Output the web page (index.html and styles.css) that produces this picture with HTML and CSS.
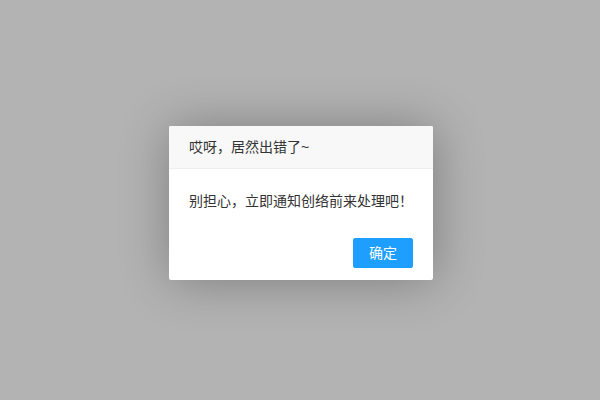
FILE: index.html
```html
<!DOCTYPE html>
<html lang="zh">
<head>
<meta charset="utf-8">
<link rel="stylesheet" href="styles.css">
</head>
<body>
<div class="stage">
  <div class="layer">
    <div class="layer-title">哎呀，居然出错了~</div>
    <div class="layer-content">别担心，立即通知创络前来处理吧！</div>
    <div class="layer-btns"><a class="btn">确定</a></div>
  </div>
</div>
</body>
</html>
```
FILE: styles.css
```css
html, body {
  margin: 0;
  padding: 0;
  height: 100%;
  background: #b3b3b3;
  font-family: "Liberation Sans", "Noto Sans CJK SC", sans-serif;
  font-size: 14px;
  color: #333;
}
.stage {
  height: 100%;
  box-sizing: border-box;
  display: flex;
  align-items: center;
  justify-content: center;
  padding: 6px 0 0 2px;
}
.layer {
  width: 264px;
  background: #fff;
  border-radius: 2px;
  box-shadow: 1px 1px 50px rgba(0,0,0,.3);
}
.layer-title {
  height: 42px;
  line-height: 42px;
  padding: 0 20px;
  background: #f8f8f8;
  border-bottom: 1px solid #eee;
  border-radius: 2px 2px 0 0;
  color: #333;
  white-space: nowrap;
}
.layer-content {
  padding: 20px;
  line-height: 24px;
  white-space: nowrap;
}
.layer-btns {
  text-align: right;
  padding: 0 15px 12px;
}
.btn {
  display: inline-block;
  height: 28px;
  line-height: 28px;
  margin: 5px 5px 0;
  padding: 0 15px;
  border: 1px solid #1e9fff;
  background: #1e9fff;
  color: #fff;
  border-radius: 2px;
  font-size: 14px;
}
```
